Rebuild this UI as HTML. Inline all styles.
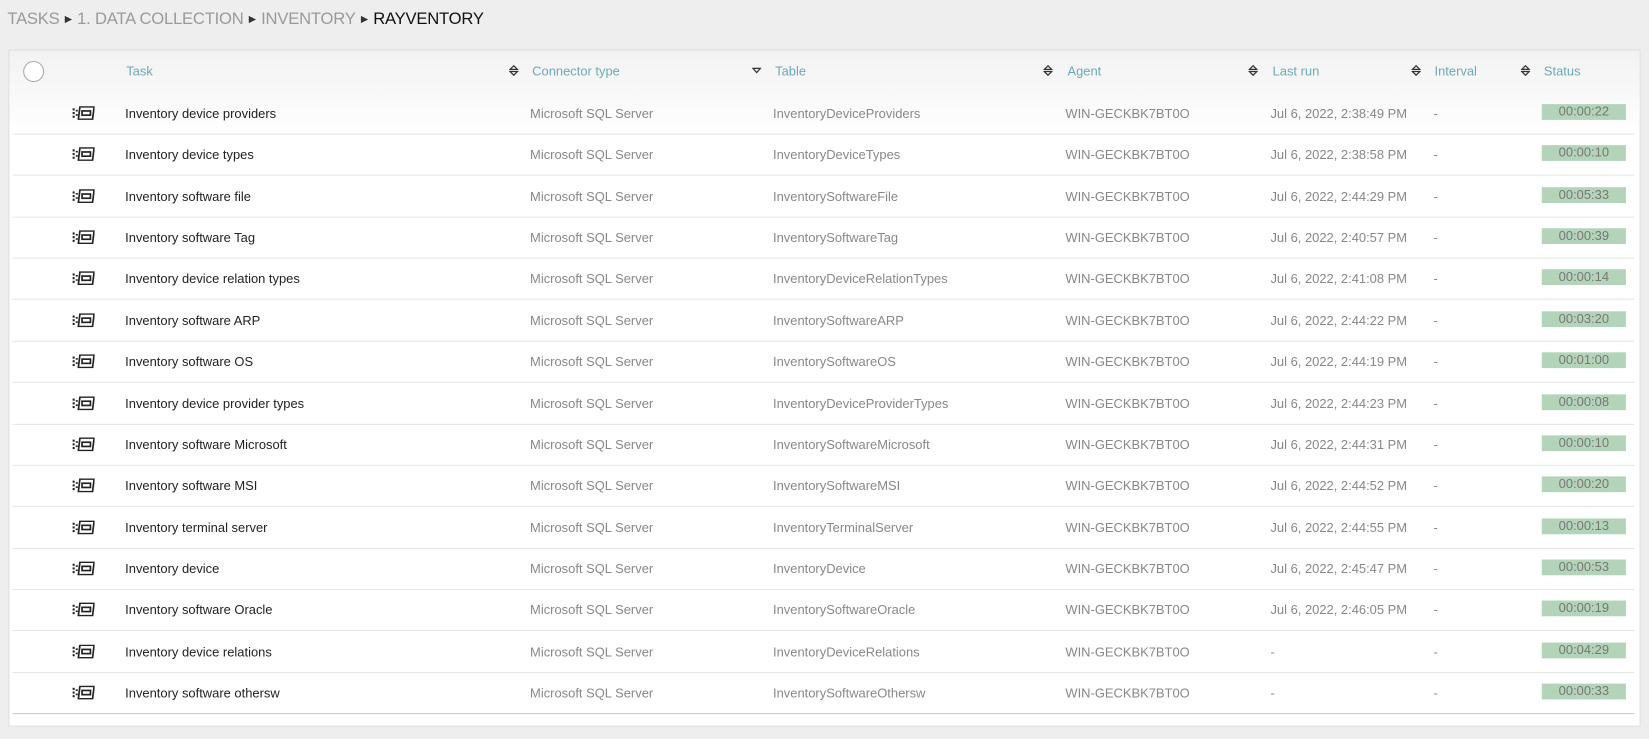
<!DOCTYPE html>
<html><head><meta charset="utf-8"><style>
body{margin:0;background:#eeeeee;font-family:"Liberation Sans",sans-serif;width:1649px;height:739px;overflow:hidden;position:relative}
.wrap{position:absolute;left:0;top:0;width:1568px;height:703px;transform:scale(1.0517);transform-origin:0 0}
.bc{position:absolute;left:7px;top:10px;font-size:15.8px;color:#9a9a9a;letter-spacing:-0.2px}
.bc b{font-weight:normal;color:#111}
.bc i{font-style:normal;font-size:9px;color:#333;margin:0 5px;position:relative;top:-2px}
.panel{position:absolute;left:8px;top:47px;height:644px;background:#fff;border:1px solid #ddd;box-sizing:border-box;width:1552px}
.hd{position:absolute;left:0;top:0;width:100%;height:80px;background:linear-gradient(#f2f2f2,#fff)}
.circ{position:absolute;left:13px;top:10px;width:18px;height:18px;border:1.5px solid #aaa;border-radius:50%;background:#fff}
.h{position:absolute;top:13px;font-size:12.3px;color:#6ea8b5}
.s{position:absolute;top:13px;width:9px;height:12px}
.row{position:absolute;left:3px;width:1542px;height:39px;border-bottom:1px solid #e6e6e6;font-size:12.3px}
.row span{position:absolute;top:13px;color:#888;white-space:nowrap}
.row .t{color:#222;left:107px}
.row svg{position:absolute;left:57px;top:13px}
.st{left:1454px!important;width:80px;height:15px;top:11px!important;background:#b3d4b9;text-align:center;line-height:15px;color:#777!important}
.bl{position:absolute;left:3px;top:630px;width:1542px;border-bottom:1px solid #ccc}
</style></head><body>
<div class="wrap">
<div class="bc">TASKS<i>▶</i>1. DATA COLLECTION<i>▶</i>INVENTORY<i>▶</i><b>RAYVENTORY</b></div>
<div class="panel">
<div class="hd"></div>
<div class="circ"></div>
<div class="h" style="left:111px">Task</div>
<svg class="s" style="left:475px" viewBox="0 0 9 12"><path d="M1 5L4.5 1.5L8 5ZM1 7L4.5 10.5L8 7Z" fill="none" stroke="#333" stroke-width="1.2"/></svg>
<div class="h" style="left:497px">Connector type</div>
<svg class="s" style="left:706px" viewBox="0 0 9 12"><path d="M1 4L4.5 8L8 4Z" fill="none" stroke="#333" stroke-width="1.2"/></svg>
<div class="h" style="left:728px">Table</div>
<svg class="s" style="left:983px" viewBox="0 0 9 12"><path d="M1 5L4.5 1.5L8 5ZM1 7L4.5 10.5L8 7Z" fill="none" stroke="#333" stroke-width="1.2"/></svg>
<div class="h" style="left:1006px">Agent</div>
<svg class="s" style="left:1178px" viewBox="0 0 9 12"><path d="M1 5L4.5 1.5L8 5ZM1 7L4.5 10.5L8 7Z" fill="none" stroke="#333" stroke-width="1.2"/></svg>
<div class="h" style="left:1201px">Last run</div>
<svg class="s" style="left:1333px" viewBox="0 0 9 12"><path d="M1 5L4.5 1.5L8 5ZM1 7L4.5 10.5L8 7Z" fill="none" stroke="#333" stroke-width="1.2"/></svg>
<div class="h" style="left:1355px">Interval</div>
<svg class="s" style="left:1437px" viewBox="0 0 9 12"><path d="M1 5L4.5 1.5L8 5ZM1 7L4.5 10.5L8 7Z" fill="none" stroke="#333" stroke-width="1.2"/></svg>
<div class="h" style="left:1459px">Status</div>
<div id="rows"></div>
<div class="bl"></div>
</div>
</div>
<script>
var d=[["Inventory device providers","InventoryDeviceProviders","Jul 6, 2022, 2:38:49 PM","00:00:22"],
["Inventory device types","InventoryDeviceTypes","Jul 6, 2022, 2:38:58 PM","00:00:10"],
["Inventory software file","InventorySoftwareFile","Jul 6, 2022, 2:44:29 PM","00:05:33"],
["Inventory software Tag","InventorySoftwareTag","Jul 6, 2022, 2:40:57 PM","00:00:39"],
["Inventory device relation types","InventoryDeviceRelationTypes","Jul 6, 2022, 2:41:08 PM","00:00:14"],
["Inventory software ARP","InventorySoftwareARP","Jul 6, 2022, 2:44:22 PM","00:03:20"],
["Inventory software OS","InventorySoftwareOS","Jul 6, 2022, 2:44:19 PM","00:01:00"],
["Inventory device provider types","InventoryDeviceProviderTypes","Jul 6, 2022, 2:44:23 PM","00:00:08"],
["Inventory software Microsoft","InventorySoftwareMicrosoft","Jul 6, 2022, 2:44:31 PM","00:00:10"],
["Inventory software MSI","InventorySoftwareMSI","Jul 6, 2022, 2:44:52 PM","00:00:20"],
["Inventory terminal server","InventoryTerminalServer","Jul 6, 2022, 2:44:55 PM","00:00:13"],
["Inventory device","InventoryDevice","Jul 6, 2022, 2:45:47 PM","00:00:53"],
["Inventory software Oracle","InventorySoftwareOracle","Jul 6, 2022, 2:46:05 PM","00:00:19"],
["Inventory device relations","InventoryDeviceRelations","-","00:04:29"],
["Inventory software othersw","InventorySoftwareOthersw","-","00:00:33"]];
var ic='<svg width="21" height="13" viewBox="0 0 21 13"><rect x="0" y="2" width="2" height="2" fill="#222"/><rect x="0" y="5.5" width="2" height="2" fill="#222"/><rect x="0" y="9" width="2" height="2" fill="#222"/><rect x="3" y="3.5" width="2" height="1.5" fill="#222"/><rect x="3" y="7.5" width="2" height="1.5" fill="#222"/><path d="M7 0.5H20.5L19 12.5H5.5Z" fill="none" stroke="#222" stroke-width="1.6"/><rect x="9" y="4.5" width="8" height="4" fill="none" stroke="#222" stroke-width="1.6"/></svg>';
var h='';d.forEach(function(r,i){var top=40+i*39.36;
h+='<div class="row" style="top:'+top+'px">'+ic+'<span class="t">'+r[0]+'</span><span style="left:492px">Microsoft SQL Server</span><span style="left:723px">'+r[1]+'</span><span style="left:1001px">WIN-GECKBK7BT0O</span><span style="left:1196px">'+r[2]+'</span><span style="left:1351px">-</span><span class="st">'+r[3]+'</span></div>';});
document.getElementById('rows').innerHTML=h;
</script>
</body></html>
